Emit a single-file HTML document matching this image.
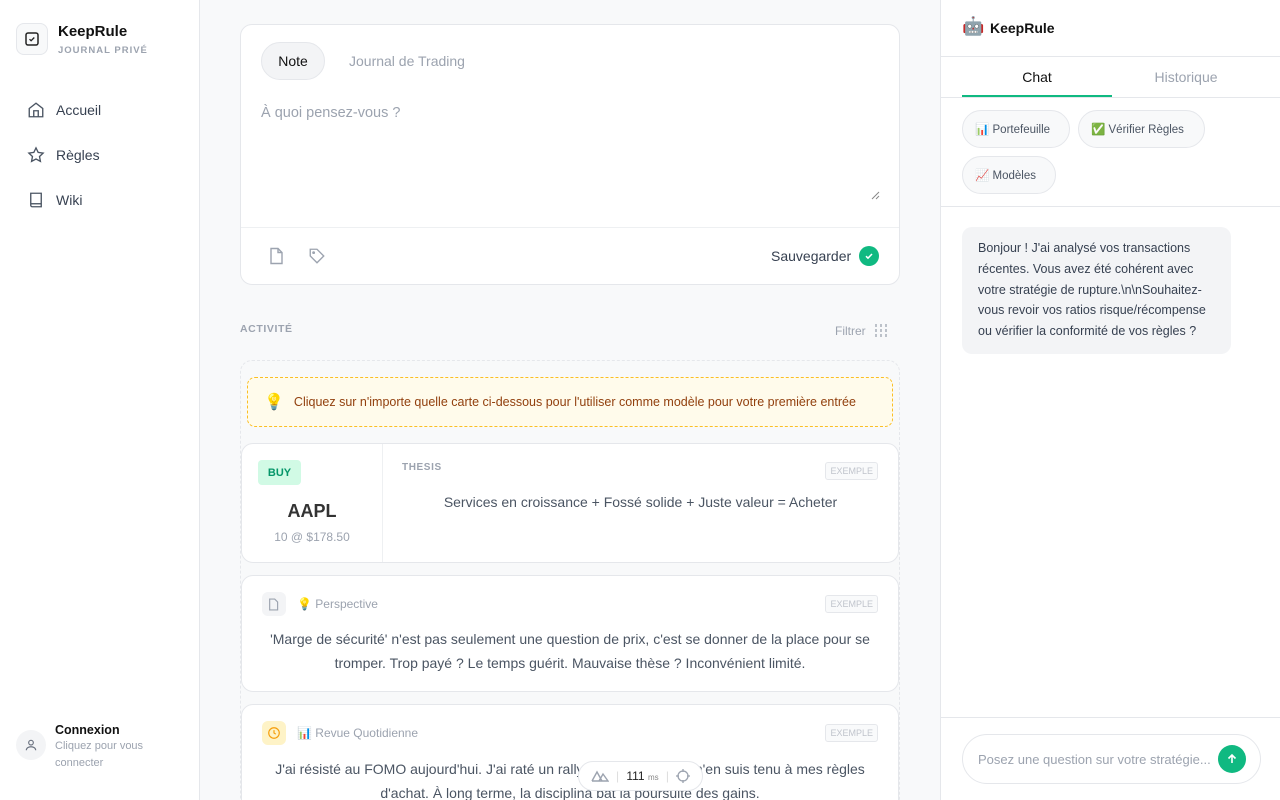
<!DOCTYPE html><html><head><meta charset="utf-8"><style>
*{box-sizing:border-box;margin:0;padding:0}
html,body{width:1280px;height:800px;overflow:hidden}
body{font-family:"Liberation Sans",sans-serif;background:#f8f9fa;position:relative;color:#1f2328}
.side{position:absolute;left:0;top:0;width:200px;height:800px;background:#fff;border-right:1px solid #e5e7eb}
.logo{position:absolute;left:16px;top:23px;width:32px;height:32px;border:1px solid #e5e7eb;border-radius:8px;background:#f8f9fa;display:flex;align-items:center;justify-content:center}
.nav{position:absolute;left:27px;display:flex;align-items:center;gap:11px;font-size:14px;color:#374151}
.main{position:absolute;left:240px;top:24px;width:660px;height:776px;overflow:hidden}
.card{background:#fff;border:1px solid #e5e7eb;border-radius:12px}
.right{position:absolute;left:940px;top:0;width:340px;height:800px;background:#fff;border-left:1px solid #e5e7eb}
.chip{position:absolute;height:38px;border:1px solid #e5e7eb;border-radius:19px;background:#f8f9fa;font-size:11.5px;color:#4b5563;display:flex;align-items:center;padding:0 12px;white-space:nowrap}
.ex{position:absolute;right:20px;font-size:9px;color:#c0c4cc;border:1px solid #e5e7eb;border-radius:3px;padding:3px 4px;background:#f9fafb}
</style></head><body>
<div class="side">
<div class="logo"><svg width="16" height="16" viewBox="0 0 16 16"><rect x="2" y="2" width="12" height="12" rx="2" fill="none" stroke="#222" stroke-width="1.5"/><path d="M5.5 8.2l1.6 1.5 3.2-3.2" fill="none" stroke="#222" stroke-width="1.3"/></svg></div>
<div style="position:absolute;left:58px;top:23px;font-weight:bold;font-size:15px;color:#111">KeepRule</div>
<div style="position:absolute;left:58px;top:45px;font-weight:bold;font-size:9.5px;color:#9ca3af;letter-spacing:1px">JOURNAL PRIVÉ</div>
<div class="nav" style="top:101px"><svg width="18" height="18" viewBox="0 0 24 24" fill="none" stroke="#4b5563" stroke-width="1.8"><path d="M3 10l9-7 9 7v11H3z"/><path d="M9 21v-8h6v8"/></svg>Accueil</div>
<div class="nav" style="top:146px"><svg width="18" height="18" viewBox="0 0 24 24" fill="none" stroke="#4b5563" stroke-width="1.8"><path d="M12 2.5l2.9 6 6.6.9-4.8 4.6 1.2 6.5L12 17.4 6.1 20.5l1.2-6.5L2.5 9.4l6.6-.9z"/></svg>Règles</div>
<div class="nav" style="top:191px"><svg width="18" height="18" viewBox="0 0 24 24" fill="none" stroke="#4b5563" stroke-width="1.8"><path d="M5 3h14v18H7a2 2 0 01-2-2z"/><path d="M5 17h14"/></svg>Wiki</div>
<div style="position:absolute;left:16px;top:730px;width:30px;height:30px;border-radius:50%;background:#f3f4f6;display:flex;align-items:center;justify-content:center"><svg width="14" height="14" viewBox="0 0 24 24" fill="none" stroke="#6b7280" stroke-width="2"><circle cx="12" cy="8" r="4"/><path d="M4 21c0-4 4-6 8-6s8 2 8 6"/></svg></div>
<div style="position:absolute;left:55px;top:723px;font-weight:bold;font-size:12.5px;color:#111">Connexion</div>
<div style="position:absolute;left:55px;top:738px;font-size:11px;color:#9ca3af;line-height:17px;width:110px">Cliquez pour vous connecter</div>
</div>

<div class="main">
<div class="card" style="height:261px;position:relative">
<div style="position:absolute;left:20px;top:17px;height:38px;width:64px;border:1px solid #e5e7eb;border-radius:19px;background:#f3f4f6;font-size:14px;display:flex;align-items:center;justify-content:center;color:#111">Note</div>
<div style="position:absolute;left:108px;top:28px;font-size:14px;color:#9ca3af">Journal de Trading</div>
<div style="position:absolute;left:20px;top:80px;font-size:14.5px;color:#9ca3af">À quoi pensez-vous ?</div>
<svg style="position:absolute;left:630px;top:166px" width="9" height="9"><path d="M1 8L8 1M5 8L8 5" stroke="#888" stroke-width="1"/></svg>
<div style="position:absolute;left:0;right:0;top:202px;border-top:1px solid #eef0f2"></div>
<svg style="position:absolute;left:28px;top:222px" width="16" height="18" viewBox="0 0 16 18" fill="none" stroke="#9ca3af" stroke-width="1.4"><path d="M2 1.5h7l4 4v11H2z"/><path d="M9 1.5v4h4"/></svg>
<svg style="position:absolute;left:67px;top:222px" width="18" height="18" viewBox="0 0 24 24" fill="none" stroke="#9ca3af" stroke-width="1.8"><path d="M3 3h9l9 9-9 9-9-9z"/><circle cx="7.5" cy="7.5" r="1"/></svg>
<div style="position:absolute;left:530px;top:223px;font-size:14px;color:#374151">Sauvegarder</div>
<div style="position:absolute;left:618px;top:221px;width:20px;height:20px;border-radius:50%;background:#10b981;display:flex;align-items:center;justify-content:center"><svg width="10" height="10" viewBox="0 0 10 10"><path d="M2 5.2l2 2 4-4.2" fill="none" stroke="#fff" stroke-width="1.5"/></svg></div>
</div>
<div style="position:absolute;left:0;top:299px;font-size:10.5px;font-weight:bold;color:#9ca3af;letter-spacing:.6px">ACTIVITÉ</div>
<div style="position:absolute;left:595px;top:300px;font-size:12px;color:#9ca3af">Filtrer</div>
<svg style="position:absolute;left:634px;top:300px" width="14" height="13" viewBox="0 0 14 13" stroke="#9ca3af" stroke-width="1.3"><path d="M2 0v13M7 0v13M12 0v13" stroke-dasharray="3 2"/></svg>

<div style="position:absolute;left:0;top:336px;width:660px;height:460px;border:1px dashed #e5e7eb;border-bottom:none;border-radius:12px 12px 0 0"></div>
<div style="position:absolute;left:7px;top:353px;width:646px;height:50px;background:#fffbeb;border:1px dashed #fbbf24;border-radius:8px;font-size:12.5px;color:#92400e;display:flex;align-items:center;padding-left:16px;gap:10px"><span style="font-size:16px">💡</span>Cliquez sur n'importe quelle carte ci-dessous pour l'utiliser comme modèle pour votre première entrée</div>

<div class="card" style="position:absolute;left:1px;top:419px;width:658px;height:120px">
<div style="position:absolute;left:140px;top:0;bottom:0;border-left:1px solid #eef0f2"></div>
<div style="position:absolute;left:16px;top:16px;width:43px;height:25px;background:#d1fae5;border-radius:4px;color:#059669;font-size:11px;font-weight:bold;display:flex;align-items:center;justify-content:center">BUY</div>
<div style="position:absolute;left:0;width:140px;top:57px;text-align:center;font-size:18px;font-weight:bold;color:#333">AAPL</div>
<div style="position:absolute;left:0;width:140px;top:86px;text-align:center;font-size:12px;color:#9ca3af">10 @ $178.50</div>
<div style="position:absolute;left:160px;top:18px;font-size:10px;font-weight:bold;color:#9ca3af;letter-spacing:.6px">THESIS</div>
<div class="ex" style="top:18px">EXEMPLE</div>
<div style="position:absolute;left:141px;right:0;top:50px;text-align:center;font-size:14px;color:#4b5563">Services en croissance + Fossé solide + Juste valeur = Acheter</div>
</div>

<div class="card" style="position:absolute;left:1px;top:551px;width:658px;height:117px">
<div style="position:absolute;left:20px;top:16px;width:24px;height:24px;background:#f3f4f6;border-radius:6px;display:flex;align-items:center;justify-content:center"><svg width="12" height="13" viewBox="0 0 16 18" fill="none" stroke="#9ca3af" stroke-width="1.6"><path d="M2 1.5h7l4 4v11H2z"/></svg></div>
<div style="position:absolute;left:55px;top:21px;font-size:12px;color:#9ca3af">💡 Perspective</div>
<div class="ex" style="top:19px">EXEMPLE</div>
<div style="position:absolute;left:20px;right:20px;top:51px;text-align:center;font-size:14px;line-height:24px;color:#4b5563">'Marge de sécurité' n'est pas seulement une question de prix, c'est se donner de la place pour se tromper. Trop payé ? Le temps guérit. Mauvaise thèse ? Inconvénient limité.</div>
</div>

<div class="card" style="position:absolute;left:1px;top:680px;width:658px;height:120px">
<div style="position:absolute;left:20px;top:16px;width:24px;height:24px;background:#fef3c7;border-radius:6px;display:flex;align-items:center;justify-content:center"><svg width="14" height="14" viewBox="0 0 24 24" fill="none" stroke="#f59e0b" stroke-width="2"><circle cx="12" cy="12" r="9"/><path d="M12 7v5l3 2"/></svg></div>
<div style="position:absolute;left:55px;top:21px;font-size:12px;color:#9ca3af">📊 Revue Quotidienne</div>
<div class="ex" style="top:19px">EXEMPLE</div>
<div style="position:absolute;left:20px;right:20px;top:52px;text-align:center;font-size:14px;line-height:24px;color:#4b5563">J'ai résisté au FOMO aujourd'hui. J'ai raté un rally de 10%, mais je m'en suis tenu à mes règles d'achat. À long terme, la disciplina bat la poursuite des gains.</div>
</div>
</div>

<div style="position:absolute;left:578px;top:761px;width:125px;height:30px;background:#fff;border:1px solid #e5e7eb;border-radius:15px;display:flex;align-items:center;justify-content:space-around;padding:0 8px;font-size:12px;color:#222">
<svg width="18" height="12" viewBox="0 0 18 12" fill="none" stroke="#9ca3af" stroke-width="1.4"><path d="M1 11L6 2l5 9M8 11l4-7 5 7H1"/></svg><span style="color:#ddd">|</span><span>111 <small style="font-size:8px;color:#888">ms</small></span><span style="color:#ddd">|</span>
<svg width="14" height="14" viewBox="0 0 14 14" fill="none" stroke="#9ca3af" stroke-width="1.3"><circle cx="7" cy="7" r="5"/><path d="M7 0v3M7 11v3M0 7h3M11 7h3"/></svg></div>

<div class="right">
<div style="position:absolute;left:21px;top:16px;font-size:18px">🤖</div>
<div style="position:absolute;left:49px;top:20px;font-weight:bold;font-size:14px;color:#111">KeepRule</div>
<div style="position:absolute;left:0;right:0;top:56px;border-top:1px solid #e5e7eb"></div>
<div style="position:absolute;left:21px;width:150px;top:69px;text-align:center;font-size:14px;color:#111">Chat</div>
<div style="position:absolute;left:21px;width:150px;top:95px;border-top:2px solid #10b981"></div>
<div style="position:absolute;left:170px;width:150px;top:69px;text-align:center;font-size:14px;color:#9ca3af">Historique</div>
<div style="position:absolute;left:0;right:0;top:97px;border-top:1px solid #e5e7eb"></div>
<div class="chip" style="left:21px;top:110px;width:108px">📊 Portefeuille</div>
<div class="chip" style="left:137px;top:110px;width:127px">✅ Vérifier Règles</div>
<div class="chip" style="left:21px;top:156px;width:94px">📈 Modèles</div>
<div style="position:absolute;left:0;right:0;top:206px;border-top:1px solid #e5e7eb"></div>
<div style="position:absolute;left:21px;top:227px;width:269px;height:127px;background:#f3f4f6;border-radius:10px;padding:11px 16px;font-size:12.5px;line-height:20.8px;color:#374151">Bonjour ! J'ai analysé vos transactions récentes. Vous avez été cohérent avec votre stratégie de rupture.\n\nSouhaitez-vous revoir vos ratios risque/récompense ou vérifier la conformité de vos règles ?</div>
<div style="position:absolute;left:0;right:0;top:717px;border-top:1px solid #e5e7eb"></div>
<div style="position:absolute;left:21px;top:734px;width:299px;height:50px;border:1px solid #e5e7eb;border-radius:25px;font-size:13px;color:#9ca3af;padding:17px 0 0 15px">Posez une question sur votre stratégie...</div>
<div style="position:absolute;left:277px;top:745px;width:28px;height:28px;border-radius:50%;background:#10b981;display:flex;align-items:center;justify-content:center"><svg width="12" height="12" viewBox="0 0 12 12" fill="none" stroke="#fff" stroke-width="1.6"><path d="M6 10V2M2.5 5.5L6 2l3.5 3.5"/></svg></div>
</div>
</body></html>
